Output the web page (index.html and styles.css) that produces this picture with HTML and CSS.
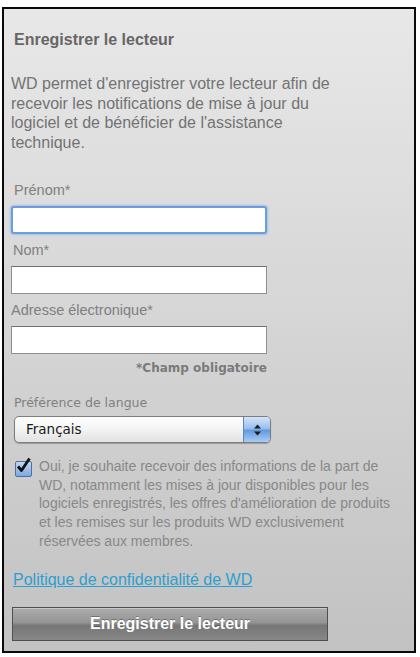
FILE: index.html
```html
<!DOCTYPE html>
<html lang="fr">
<head>
    <meta charset="UTF-8">
    <meta name="viewport" content="width=device-width, initial-scale=1.0">
    <title>Enregistrer le lecteur</title>
    <link rel="stylesheet" href="styles.css">
</head>
<body>
    <div class="panel">
        <h2 class="panel-title">Enregistrer le lecteur</h2>
        <p class="intro">WD permet d'enregistrer votre lecteur afin de recevoir les notifications de mise à jour du logiciel et de bénéficier de l'assistance technique.</p>

        <form class="reg-form">
            <label class="field-label first" for="prenom">Prénom*</label>
            <input class="text-input focused" type="text" id="prenom">

            <label class="field-label" for="nom">Nom*</label>
            <input class="text-input" type="text" id="nom">

            <label class="field-label tight" for="email">Adresse électronique*</label>
            <input class="text-input" type="text" id="email">

            <div class="required-note">*Champ obligatoire</div>

            <div class="lang-label">Préférence de langue</div>
            <div class="select-box">
                <span class="select-value">Français</span>
                <span class="select-arrows">
                    <svg width="9" height="14" viewBox="0 0 9 14">
                        <path d="M4.5 1.5 L8 5.5 L1 5.5 Z" fill="#1b1b1b"/>
                        <path d="M4.5 12.5 L8 8.5 L1 8.5 Z" fill="#1b1b1b"/>
                    </svg>
                </span>
            </div>

            <div class="optin">
                <span class="check">
                    <svg width="18" height="18" viewBox="0 0 18 18">
                        <path d="M4 9.5 L7.5 13.5 L15.5 1.5" fill="none" stroke="#111" stroke-width="2.8" stroke-linejoin="round"/>
                    </svg>
                </span>
                <p class="optin-text">Oui, je souhaite recevoir des informations de la part de WD, notamment les mises à jour disponibles pour les logiciels enregistrés, les offres d'amélioration de produits et les remises sur les produits WD exclusivement réservées aux membres.</p>
            </div>

            <a class="privacy-link" href="#">Politique de confidentialité de WD</a>

            <button class="submit-btn" type="button">Enregistrer le lecteur</button>
        </form>
    </div>
</body>
</html>
```

FILE: styles.css
```css
* {
    margin: 0;
    padding: 0;
    box-sizing: border-box;
}

body {
    background: #ffffff;
    font-family: "Liberation Sans", Arial, sans-serif;
}

.panel {
    margin: 7px 4px 4px 2px;
    height: 646px;
    border: 2px solid #0a0a0a;
    background: linear-gradient(to bottom, #e8e8e8 0%, #d5d5d5 50%, #c2c2c2 100%);
    padding: 22px 6px 0 7px;
}

.panel-title {
    margin-left: 3px;
    font-size: 16px;
    line-height: 18px;
    font-weight: bold;
    color: #666666;
}

.intro {
    margin-top: 25px;
    width: 345px;
    font-size: 16px;
    line-height: 19.5px;
    color: #737373;
}

.reg-form {
    display: flex;
    flex-direction: column;
    align-items: flex-start;
}

.field-label {
    margin: 8px 0 8px 2px;
    font-size: 14.5px;
    line-height: 16px;
    color: #808080;
}

.field-label.first {
    margin-top: 30px;
    margin-left: 3px;
}

.field-label.tight {
    margin-left: 0;
}

.text-input {
    width: 256px;
    height: 28px;
    border: 1px solid #8f8f8f;
    border-top-color: #707070;
    background: #ffffff;
    outline: none;
}

.text-input.focused {
    border: 2px solid #6f9ddb;
    border-radius: 3px;
    box-shadow: 0 0 2px 1px #a2c1ea;
}

.required-note {
    margin-top: 7px;
    width: 256px;
    text-align: right;
    font-family: "DejaVu Sans", sans-serif;
    font-size: 12px;
    line-height: 14px;
    font-weight: bold;
    color: #7a7a7a;
}

.lang-label {
    margin: 20px 0 5px 3px;
    font-family: "DejaVu Sans", sans-serif;
    font-size: 12.5px;
    line-height: 16px;
    color: #808080;
}

.select-box {
    margin-left: 3px;
    width: 257px;
    height: 27px;
    display: flex;
    align-items: stretch;
    border: 1px solid #7d7d7d;
    border-radius: 5px;
    background: linear-gradient(to bottom, #ffffff 0%, #f3f3f3 50%, #e2e2e2 100%);
    box-shadow: 0 1px 1px rgba(0, 0, 0, 0.25);
    overflow: hidden;
}

.select-value {
    flex: 1;
    font-family: "DejaVu Sans", sans-serif;
    font-size: 13.5px;
    line-height: 25px;
    padding-left: 11px;
    color: #1a1a1a;
}

.select-arrows {
    width: 27px;
    display: flex;
    align-items: center;
    justify-content: center;
    border-left: 1px solid #5d86c0;
    background: linear-gradient(to bottom, #d3e5f9 0%, #94bdec 48%, #5f98e0 52%, #a9cdf5 100%);
}

.optin {
    display: flex;
    gap: 7px;
    margin: 14px 0 0 4px;
}

.check {
    flex: none;
    position: relative;
    width: 17px;
    height: 16px;
    margin-top: 4px;
    border: 1px solid #4f719f;
    border-radius: 2px;
    background: linear-gradient(to bottom, #c3d8f2, #7ea9e0);
}

.check svg {
    position: absolute;
    left: -2px;
    top: -5px;
}

.optin-text {
    width: 356px;
    font-size: 14px;
    line-height: 18.7px;
    color: #888888;
}

.privacy-link {
    margin: 20px 0 0 2px;
    font-size: 16px;
    line-height: 18px;
    color: #2d9fcf;
    text-decoration: underline;
}

.submit-btn {
    margin: 18px 0 0 1px;
    width: 316px;
    height: 34px;
    border: 1px solid #4f4f4f;
    box-shadow: inset 0 1px 0 rgba(255, 255, 255, 0.35);
    background: linear-gradient(to bottom, #acacac 0%, #959595 45%, #767676 55%, #888888 100%);
    color: #ffffff;
    font-family: "Liberation Sans", Arial, sans-serif;
    font-size: 16px;
    font-weight: bold;
    text-shadow: 0 -1px 0 rgba(0, 0, 0, 0.3);
    cursor: pointer;
}
```
